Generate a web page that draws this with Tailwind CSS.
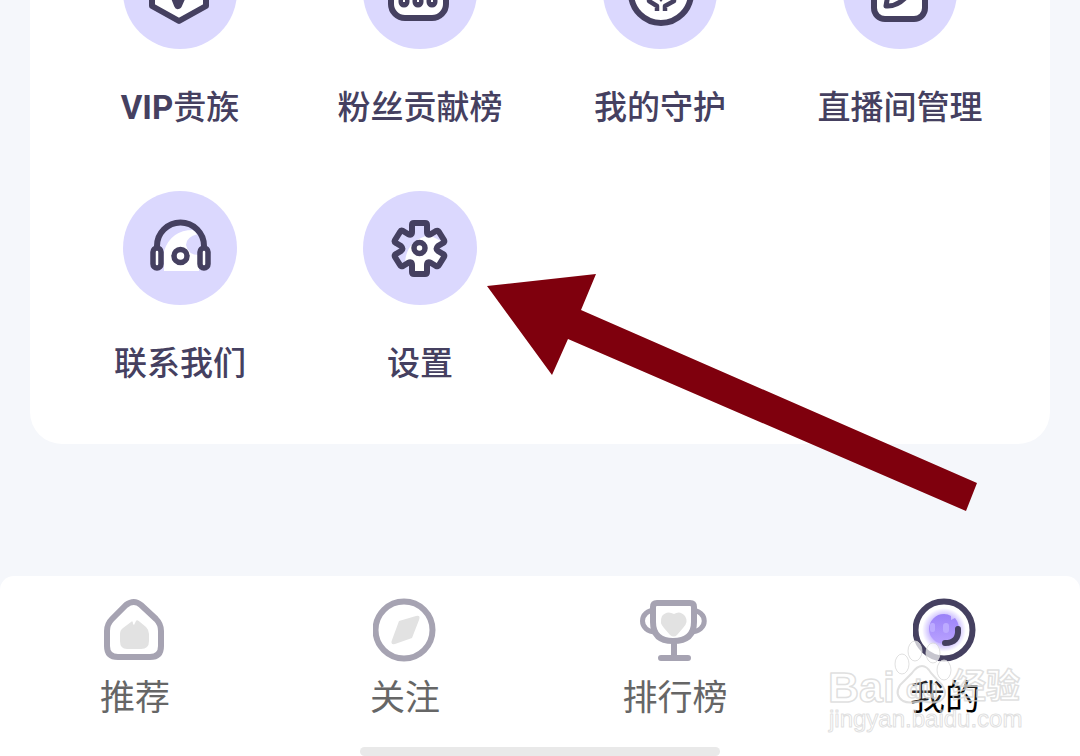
<!DOCTYPE html>
<html lang="zh-CN">
<head>
    <meta charset="UTF-8">
    <meta name="viewport" content="width=device-width, initial-scale=1.0">
    <title>我的</title>
    <script src="https://cdn.jsdelivr.net/npm/@tailwindcss/browser@4"></script>
</head>
<body class="relative flex h-screen flex-col overflow-hidden bg-[#f5f7fb] font-['Roboto','Noto_Sans_CJK_SC',sans-serif]">

    <!-- Menu card, scrolled so the first row is cut off -->
    <main class="flex min-h-0 flex-1 flex-col justify-end overflow-hidden px-[30px] pb-[132px]">
        <div class="grid grid-cols-4 gap-y-[59px] rounded-[32px] bg-white px-[30px] py-14 text-[33px] leading-[48px] font-medium text-[#454060]">
            <a href="#" class="flex flex-col items-center gap-[35px] whitespace-nowrap">
                <svg class="size-[114px]" viewBox="0 0 114 114" fill="none">
                    <circle cx="57" cy="57" r="57" fill="#dbd8fe"/>
                    <path d="M56 28 L83 42 V71 L56 86 L29 71 V42 Z" fill="#fff" stroke="#454060" stroke-width="6" stroke-linejoin="round"/>
                    <path d="M47 50 L55 70 L64 50" stroke="#454060" stroke-width="8" stroke-linecap="round" stroke-linejoin="round"/>
                </svg>
                <span><b class="font-bold">VIP</b>贵族</span>
            </a>
            <a href="#" class="flex flex-col items-center gap-[35px] whitespace-nowrap">
                <svg class="size-[114px]" viewBox="0 0 114 114" fill="none">
                    <circle cx="57" cy="57" r="57" fill="#dbd8fe"/>
                    <rect x="28" y="30" width="55" height="53" rx="14" fill="#fff" stroke="#454060" stroke-width="6"/>
                    <path d="M41 56 V67 M55 56 V67 M69 56 V67" stroke="#454060" stroke-width="11" stroke-linecap="round"/>
                    <path d="M41 56 V67 M55 56 V67 M69 56 V67" stroke="#fff" stroke-width="2"/>
                </svg>
                <span>粉丝贡献榜</span>
            </a>
            <a href="#" class="flex flex-col items-center gap-[35px] whitespace-nowrap">
                <svg class="size-[114px]" viewBox="0 0 114 114" fill="none">
                    <circle cx="57" cy="57" r="57" fill="#dbd8fe"/>
                    <circle cx="58" cy="58" r="30" fill="#fff" stroke="#454060" stroke-width="6"/>
                    <path d="M46 60 V66 L54 71 V76 M71 60 V66 L62 71 V76" stroke="#454060" stroke-width="4.500" stroke-linejoin="round"/>
                    <path d="M58 67 L51 58 H65 Z" fill="#454060"/>
                </svg>
                <span>我的守护</span>
            </a>
            <a href="#" class="flex flex-col items-center gap-[35px] whitespace-nowrap">
                <svg class="size-[114px]" viewBox="0 0 114 114" fill="none">
                    <circle cx="57" cy="57" r="57" fill="#dbd8fe"/>
                    <rect x="31" y="30" width="51" height="54" rx="11" fill="#fff" stroke="#454060" stroke-width="6"/>
                    <path d="M47 48 L43 71 Q54 72 64 61" stroke="#454060" stroke-width="5" stroke-linecap="round" stroke-linejoin="round"/>
                </svg>
                <span>直播间管理</span>
            </a>
            <a href="#" class="flex flex-col items-center gap-[35px] whitespace-nowrap">
                <svg class="size-[114px]" viewBox="0 0 114 114" fill="none">
                    <circle cx="57" cy="57" r="57" fill="#dbd8fe"/>
                    <path d="M41 80 V60 Q48 39 70 39 L75 43 Q63 46 63 54 Q65 64 76 64 V80 Z" fill="#fff"/>
                    <path d="M34 57 V55 A23.500 23.500 0 0 1 81 55 V57" stroke="#454060" stroke-width="6"/>
                    <rect x="30" y="57" width="8" height="20" rx="4" fill="#fff" stroke="#454060" stroke-width="5.500"/>
                    <rect x="77" y="57" width="8" height="20" rx="4" fill="#fff" stroke="#454060" stroke-width="5.500"/>
                    <circle cx="57.500" cy="65" r="6.500" fill="#fff" stroke="#454060" stroke-width="5.500"/>
                </svg>
                <span>联系我们</span>
            </a>
            <a href="#" class="flex flex-col items-center gap-[35px] whitespace-nowrap">
                <svg class="size-[114px]" viewBox="0 0 114 114" fill="none">
                    <circle cx="57" cy="57" r="57" fill="#dbd8fe"/>
                    <path d="M42 72 Q43 50 66 44 L74 48 L80 51 L74 58 L81 66 L75 74 L64 73 V83 H49 V73 Z" fill="#fff"/>
                    <path d="M51 32 H62 Q64 32 64 34 V41 Q64 45 68 43 L73 40 Q75 39 76 41 L81 49 Q82 51 80 52 L75 55 Q72 58 75 60 L80 63 Q82 64 81 66 L76 74 Q75 76 73 75 L68 72 Q64 70 64 74 V81 Q64 83 62 83 H51 Q49 83 49 81 V74 Q49 70 45 72 L40 75 Q38 76 37 74 L32 66 Q31 64 33 63 L38 60 Q41 58 38 55 L33 52 Q31 51 32 49 L37 41 Q38 39 40 40 L45 43 Q49 45 49 41 V34 Q49 32 51 32 Z" stroke="#454060" stroke-width="6" stroke-linejoin="round"/>
                    <circle cx="56.500" cy="57" r="5.500" fill="#fff" stroke="#454060" stroke-width="5.500"/>
                </svg>
                <span>设置</span>
            </a>
        </div>
    </main>

    <!-- Bottom tab bar -->
    <nav class="flex flex-col items-center gap-6 rounded-t-[14px] bg-white pt-[22px]">
        <div class="grid w-full grid-cols-4 text-[35px] leading-[48px] text-[#666]">
            <a href="#" class="flex flex-col items-center gap-[13px]">
                <svg class="size-16" viewBox="0 0 64 64" fill="none">
                    <path d="M23 7 Q31 1 38 7 L53 21 Q58 26 58 33 V48 Q58 59 47 59 H15 Q4 59 4 48 V33 Q4 26 9 21 Z" stroke="#a6a3b2" stroke-width="6"/>
                    <path d="M28 24 Q30 22 30 26 L31 27 L33 23 Q34 21 37 24 L43 29 Q46 32 46 36 V43 Q46 51 38 51 H24 Q17 51 17 43 V36 Q17 32 20 30 Z" fill="#e2e2e2"/>
                </svg>
                <span>推荐</span>
            </a>
            <a href="#" class="flex flex-col items-center gap-[13px]">
                <svg class="size-16" viewBox="0 0 64 64" fill="none">
                    <circle cx="31" cy="32" r="28.500" stroke="#a6a3b2" stroke-width="6"/>
                    <path d="M26 23 L43 18 Q48 17 46 22 L39 40 L22 46 Q17 47 19 42 Z" fill="#e2e2e2"/>
                </svg>
                <span>关注</span>
            </a>
            <a href="#" class="flex flex-col items-center gap-[13px]">
                <svg class="h-16 w-[70px]" viewBox="0 0 70 64" fill="none">
                    <path d="M16 12 C-2 12 -2 34 16 34 M50 12 C69 12 69 34 50 34" stroke="#a6a3b2" stroke-width="5"/>
                    <path d="M17 5 H50 Q54 5 54 9 V24 Q54 43 33 43 Q13 43 13 24 V9 Q13 5 17 5 Z" fill="#fff" stroke="#a6a3b2" stroke-width="6"/>
                    <path d="M34 44 V59 M21 60 H48" stroke="#a6a3b2" stroke-width="6" stroke-linecap="round"/>
                    <path d="M34 16 Q27 12 22 18 Q19 25 24 30 L30 37 Q34 40 37 37 L43 30 Q49 24 45 18 Q40 12 34 16 Z" fill="#e2e2e2"/>
                </svg>
                <span>排行榜</span>
            </a>
            <a href="#" class="flex flex-col items-center gap-[13px] text-black">
                <svg class="size-16" viewBox="0 0 64 64" fill="none">
                    <defs>
                        <radialGradient id="glow">
                            <stop offset="0.650" stop-color="#cbbcff"/>
                            <stop offset="1" stop-color="#fff"/>
                        </radialGradient>
                        <linearGradient id="ball" x1="0" y1="0" x2="0" y2="1">
                            <stop offset="0" stop-color="#9b82f8"/>
                            <stop offset="1" stop-color="#b9a2ff"/>
                        </linearGradient>
                    </defs>
                    <circle cx="31" cy="32" r="28.500" fill="#fff" stroke="#454060" stroke-width="6"/>
                    <circle cx="31" cy="32" r="22" fill="url(#glow)"/>
                    <path d="M31 16 Q35 16 38 18 V22 L42 20 Q46 25 46 31 A15 15 0 1 1 31 16 Z" fill="url(#ball)"/>
                    <rect x="17" y="25" width="5" height="9" rx="2" fill="#bcaaff"/>
                    <rect x="30" y="25" width="6" height="10" rx="3" fill="#bcaaff"/>
                    <path d="M45 31 Q46 45 32 45" stroke="#454060" stroke-width="6" stroke-linecap="round"/>
                </svg>
                <span>我的</span>
            </a>
        </div>
        <div class="h-[9px] w-1/3 rounded-full bg-[#e9e9e9]"></div>
    </nav>

    <!-- Arrow and watermark drawn over the page -->
    <svg class="pointer-events-none absolute inset-0 size-full" viewBox="0 0 1080 756">
        <polygon points="487,286 596,274 581,310 977,483 966,511 568,339 552,375" fill="#7f000d"/>
        <g fill="#fff" fill-opacity="0.700" stroke="#d8d8d8" stroke-opacity="0.800">
            <ellipse cx="902" cy="664" rx="7" ry="10"/>
            <ellipse cx="915" cy="651" rx="7" ry="10"/>
            <ellipse cx="933" cy="653" rx="7" ry="10"/>
            <ellipse cx="944" cy="670" rx="7" ry="10"/>
            <path fill-opacity="0.150" stroke-width="2" d="M922 666 Q927 666 931 673 L942 685 Q949 695 940 701 Q934 704 922 701 Q909 704 903 701 Q894 695 900 685 L912 673 Q917 666 922 666 Z"/>
        </g>
        <g fill="#fff" fill-opacity="0.150" stroke="#d8d8d8" stroke-opacity="0.800" stroke-width="1.500" stroke-linejoin="round" font-family="Liberation Sans, Noto Sans CJK SC, sans-serif">
            <text x="828" y="702" font-size="43" font-weight="700">Bai</text>
            <text x="906" y="698" font-size="26" font-weight="700">du</text>
            <text x="952" y="698" font-size="34" font-weight="700">经验</text>
            <text x="829" y="727" font-size="24" stroke-width="1">jingyan.baidu.com</text>
        </g>
    </svg>
</body>
</html>
